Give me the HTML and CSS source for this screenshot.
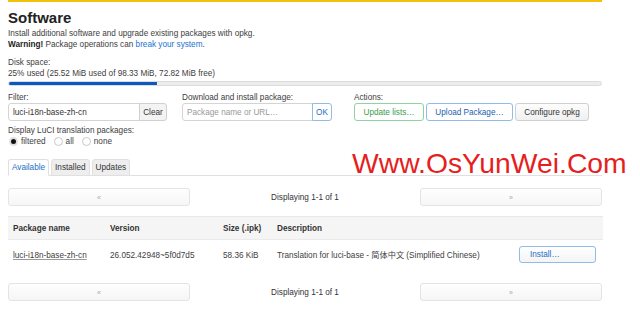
FILE: index.html
```html
<!DOCTYPE html>
<html lang="en">

<head>
    <meta charset="UTF-8">
    <title>Software - LuCI</title>
    <link rel="stylesheet" href="styles.css">
</head>

<body>
    <div class="page">
        <h2>Software</h2>
        <div class="desc">
            Install additional software and upgrade existing packages with opkg.<br>
            <strong>Warning!</strong> Package operations can <a href="#">break your system</a>.
        </div>

        <div class="disk">
            <div>Disk space:</div>
            <div>25% used (25.52 MiB used of 98.33 MiB, 72.82 MiB free)</div>
            <div class="bar"><div class="bar-fill" style="width: 25%"></div></div>
        </div>

        <div class="controls">
            <div class="ctl ctl-filter">
                <label>Filter:</label>
                <div class="group">
                    <input type="text" class="inp inp-filter" value="luci-i18n-base-zh-cn">
                    <button class="btn btn-addon">Clear</button>
                </div>
            </div>
            <div class="ctl ctl-download">
                <label>Download and install package:</label>
                <div class="group">
                    <input type="text" class="inp inp-url" placeholder="Package name or URL…">
                    <button class="btn btn-addon btn-ok">OK</button>
                </div>
            </div>
            <div class="ctl">
                <label>Actions:</label>
                <div class="actions">
                    <button class="btn btn-update">Update lists…</button>
                    <button class="btn btn-upload">Upload Package…</button>
                    <button class="btn btn-config">Configure opkg</button>
                </div>
            </div>
        </div>

        <div class="i18n">
            <div>Display LuCI translation packages:</div>
            <div class="radios">
                <span class="opt"><span class="radio checked"></span>filtered</span>
                <span class="opt"><span class="radio"></span>all</span>
                <span class="opt"><span class="radio"></span>none</span>
            </div>
        </div>

        <ul class="tabs">
            <li class="tab active">Available</li>
            <li class="tab">Installed</li>
            <li class="tab">Updates</li>
        </ul>

        <div class="pager">
            <button class="btn btn-page">«</button>
            <span class="pager-info">Displaying 1-1 of 1</span>
            <button class="btn btn-page">»</button>
        </div>

        <table class="pkgs">
            <tr class="head">
                <th class="c-name">Package name</th>
                <th class="c-ver">Version</th>
                <th class="c-size">Size (.ipk)</th>
                <th class="c-desc">Description</th>
                <th class="c-act"></th>
            </tr>
            <tr>
                <td class="c-name"><a href="#" class="pkg-link">luci-i18n-base-zh-cn</a></td>
                <td class="c-ver">26.052.42948~5f0d7d5</td>
                <td class="c-size">58.36 KiB</td>
                <td class="c-desc">Translation for luci-base - 简体中文 (Simplified Chinese)</td>
                <td class="c-act"><button class="btn btn-install">Install…</button></td>
            </tr>
        </table>

        <div class="pager">
            <button class="btn btn-page">«</button>
            <span class="pager-info">Displaying 1-1 of 1</span>
            <button class="btn btn-page">»</button>
        </div>

        <div class="watermark">Www.OsYunWei.Com</div>
    </div>
</body>

</html>
```

FILE: styles.css
```css
body {
    margin: 0;
    padding: 0;
    background-color: #fff;
    font-family: "Liberation Sans", Arial, "Noto Sans CJK SC", sans-serif;
    font-size: 8.2px;
    line-height: 11px;
    color: #404040;
}

.page {
    position: relative;
    width: 594px;
    margin: 0 0 0 8px;
    border-top: 2px solid #f2c10c;
}

h2 {
    margin: 6px 0 0;
    font-size: 15px;
    line-height: 20px;
    color: #222;
}

.desc strong {
    color: #222;
}

a {
    color: #1a73d0;
    text-decoration: none;
}

.disk {
    margin-top: 7px;
}

.bar {
    height: 3px;
    margin-top: 2px;
    background-color: #ececec;
    border: 1px solid #dcdcdc;
    border-radius: 3px;
    overflow: hidden;
}

.bar-fill {
    height: 100%;
    background-color: #0b58c0;
}

.controls {
    display: flex;
    margin-top: 6px;
}

.ctl label {
    display: block;
}

.ctl-filter {
    width: 174px;
}

.ctl-download {
    width: 172px;
}

.group {
    display: flex;
}

.inp {
    height: 18px;
    box-sizing: border-box;
    margin: 0;
    padding: 0 4px;
    border: 1px solid #d4d4d4;
    border-radius: 3px 0 0 3px;
    font-family: inherit;
    font-size: 8.2px;
    color: #333;
    background-color: #fff;
}

.inp::placeholder {
    color: #999;
}

.inp-filter {
    width: 132px;
}

.inp-url {
    width: 131px;
}

.btn {
    box-sizing: border-box;
    margin: 0;
    padding: 0;
    font-family: inherit;
    font-size: 8.2px;
    color: #333;
    background: linear-gradient(#fdfdfd, #f0f0f0);
    border: 1px solid #d0d0d0;
    border-radius: 3px;
    cursor: pointer;
}

.btn-addon {
    height: 18px;
    width: 28px;
    margin-left: -1px;
    border-radius: 0 3px 3px 0;
    background: #f3f3f3;
}

.btn-ok {
    width: 20px;
    color: #1a6fc4;
    background: #fff;
    border-color: #8fbce8;
}

.actions {
    display: flex;
    gap: 2px;
}

.actions .btn {
    height: 18px;
}

.btn-update {
    width: 70px;
    color: #3a9c4c;
    background: #fff;
    border-color: #8fd3a0;
}

.btn-upload {
    width: 87px;
    color: #1a5fae;
    background: #fff;
    border-color: #8fbce8;
}

.btn-config {
    width: 74px;
}

.i18n {
    margin-top: 4px;
}

.radios {
    display: flex;
    align-items: center;
    gap: 7px;
}

.opt {
    display: flex;
    align-items: center;
}

.radio {
    display: inline-block;
    width: 9px;
    height: 9px;
    margin: 0 3px 0 1px;
    border: 1px solid #c8c8c8;
    border-radius: 50%;
    box-sizing: border-box;
    background: #fff;
}

.radio.checked {
    border: 2px solid #e0e0e0;
    background: #111;
}

.tabs {
    display: flex;
    gap: 2px;
    list-style: none;
    margin: 12px 0 0;
    padding: 0;
    border-bottom: 1px solid #e0e0e0;
}

.tab {
    height: 15px;
    line-height: 15px;
    padding: 0 3px;
    margin-bottom: -1px;
    background-color: #eee;
    border: 1px solid #e0e0e0;
    border-radius: 3px 3px 0 0;
    color: #333;
}

.tab.active {
    background-color: #fff;
    border-bottom-color: #fff;
    color: #1a6fc4;
}

.pager {
    display: flex;
    align-items: center;
    margin-top: 12px;
}

.btn-page {
    width: 182px;
    height: 18px;
    color: #aaa;
    font-size: 7px;
    border-color: #e4e4e4;
    background: linear-gradient(#fefefe, #f6f6f6);
}

.pager-info {
    flex: 1;
    text-align: center;
    color: #333;
}

.pkgs {
    width: 595px;
    margin-top: 10px;
    border-collapse: collapse;
}

.pkgs th,
.pkgs td {
    padding: 0 5px;
    text-align: left;
    white-space: nowrap;
}

.pkgs .head {
    height: 23px;
    background-color: #f5f5f5;
    border-top: 1px solid #e8e8e8;
    border-bottom: 1px solid #eaeaea;
}

.pkgs th {
    font-weight: bold;
    color: #333;
}

.pkgs td {
    height: 31px;
    color: #404040;
}

.c-name {
    width: 87px;
}

.c-ver {
    width: 103px;
}

.c-size {
    width: 44px;
}

.c-desc {
    width: 228px;
}

.c-act {
    padding-left: 9px !important;
}

.pkg-link {
    color: #404040;
    text-decoration: underline;
    text-decoration-color: #999;
}

.btn-install {
    width: 77px;
    height: 17px;
    text-align: left;
    padding-left: 10px;
    color: #1a6fc4;
    border-color: #8fbce8;
    background: linear-gradient(#fff, #f4f4f4);
    margin-bottom: 2px;
}

.watermark {
    position: absolute;
    left: 344px;
    top: 147px;
    font-size: 28.3px;
    line-height: 28px;
    color: #e61e1e;
    white-space: nowrap;
}
```
